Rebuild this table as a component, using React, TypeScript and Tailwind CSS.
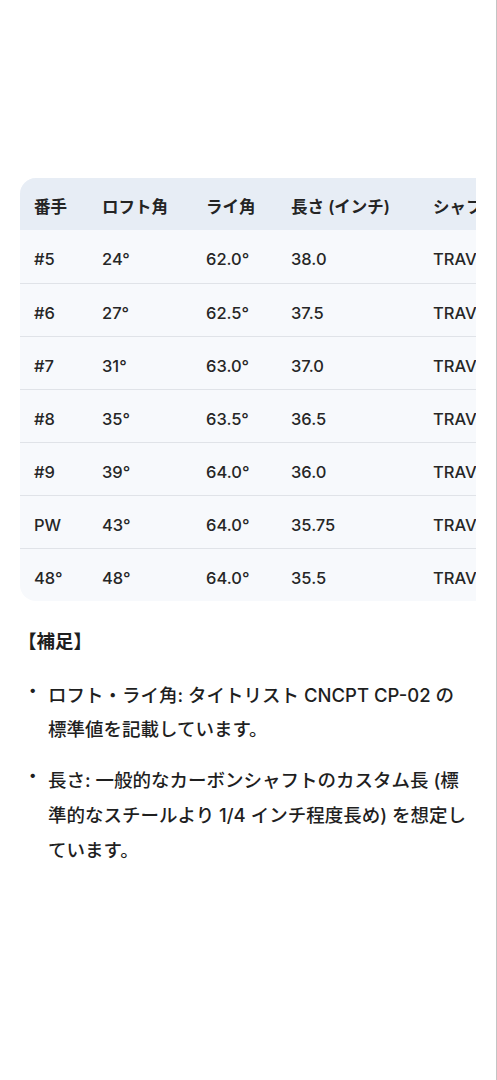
const rows = [
  ["#5", "24°", "62.0°", "38.0"],
  ["#6", "27°", "62.5°", "37.5"],
  ["#7", "31°", "63.0°", "37.0"],
  ["#8", "35°", "63.5°", "36.5"],
  ["#9", "39°", "64.0°", "36.0"],
  ["PW", "43°", "64.0°", "35.75"],
  ["48°", "48°", "64.0°", "35.5"],
];

const font = { fontFamily: '"Inter", "Noto Sans CJK JP", sans-serif' };

export default function App() {
  return (
    <div
      className="min-h-screen w-[497px] bg-white border-r border-[#c4c4c4] text-[#1f1f1f]"
      style={font}
    >
      <div className="h-[178px]" />

      {/* spec table, scrolls sideways */}
      <div className="mx-5 overflow-x-hidden">
        <div className="w-[700px] rounded-2xl overflow-hidden bg-[#f7f9fc]">
          <table className="table-fixed border-collapse text-[16.5px]">
            <colgroup>
              <col className="w-[68px]" />
              <col className="w-[104px]" />
              <col className="w-[85px]" />
              <col className="w-[142px]" />
              <col className="w-[300px]" />
            </colgroup>
            <thead>
              <tr className="bg-[#e7edf5] h-[52px]">
                {["番手", "ロフト角", "ライ角", "長さ (インチ)", "シャフト"].map((h) => (
                  <th key={h} className="px-3.5 pt-[6px] text-left font-semibold whitespace-nowrap text-[#242424]">
                    {h}
                  </th>
                ))}
              </tr>
            </thead>
            <tbody>
              {rows.map((r, i) => (
                <tr key={r[0]} className={`h-[53px] ${i > 0 ? "border-t border-[#e0e3e8]" : ""}`}>
                  {r.map((c, j) => (
                    <td key={j} className="px-3.5 pt-[7px] font-medium whitespace-nowrap text-[#262626]">
                      {c}
                    </td>
                  ))}
                  <td className="px-3.5 pt-[7px] font-medium whitespace-nowrap text-[#262626]">TRAVIL IRON 85</td>
                </tr>
              ))}
            </tbody>
          </table>
        </div>
      </div>

      {/* notes */}
      <div className="pl-5 pr-[24px] pt-[25px] text-[18.5px] text-[#1f1f1f]">
        <p className="font-semibold leading-[30px] -ml-[2px]">【補足】</p>
        <ul className="mt-[22px] flex flex-col gap-[17px] font-medium">
          <li className="flex">
            <span className="w-[28px] shrink-0 pl-[9px] text-[14px] leading-[24px]">•</span>
            <span className="leading-[34px]">
              ロフト・ライ角: タイトリスト CNCPT CP-02 の標準値を記載しています。
            </span>
          </li>
          <li className="flex">
            <span className="w-[28px] shrink-0 pl-[9px] text-[14px] leading-[24px]">•</span>
            <span className="leading-[35px]">
              長さ: 一般的なカーボンシャフトのカスタム長 (標準的なスチールより 1/4 インチ程度長め) を想定しています。
            </span>
          </li>
        </ul>
      </div>
    </div>
  );
}
